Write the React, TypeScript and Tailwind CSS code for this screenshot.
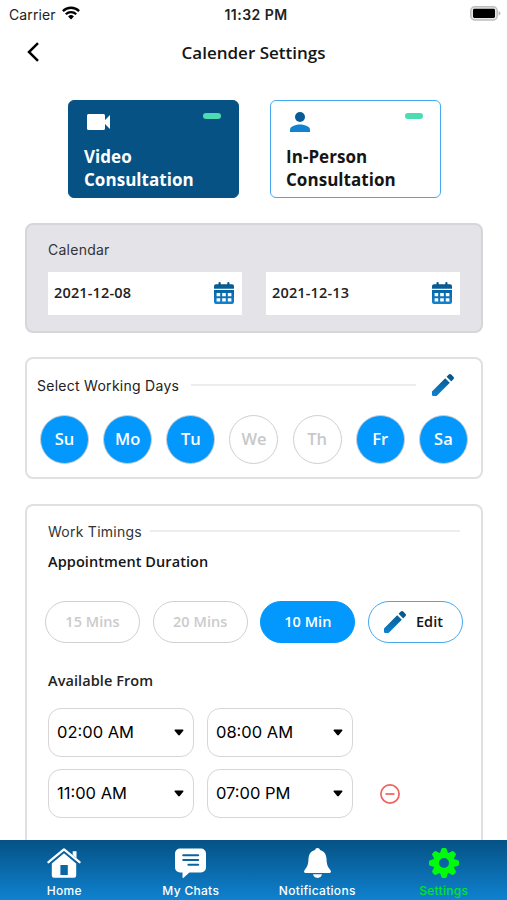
import { clsx } from "clsx"

const days = [
  { label: "Su", active: true },
  { label: "Mo", active: true },
  { label: "Tu", active: true },
  { label: "We", active: false },
  { label: "Th", active: false },
  { label: "Fr", active: true },
  { label: "Sa", active: true },
]

const durations = [
  { label: "15 Mins", active: false },
  { label: "20 Mins", active: false },
  { label: "10 Min", active: true },
]

const slots = [
  { from: "02:00 AM", to: "08:00 AM", removable: false },
  { from: "11:00 AM", to: "07:00 PM", removable: true },
]

const tabs = [
  { label: "Home", icon: HomeIcon, active: false },
  { label: "My Chats", icon: ChatIcon, active: false },
  { label: "Notifications", icon: BellIcon, active: false },
  { label: "Settings", icon: GearIcon, active: true },
]

function BlueGradient() {
  return (
    <defs>
      <linearGradient id="blue" x1="0" y1="0" x2="0" y2="1">
        <stop offset="0" stopColor="#065285" />
        <stop offset="1" stopColor="#0f83d2" />
      </linearGradient>
    </defs>
  )
}

function WifiIcon() {
  return (
    <svg className="w-[18px] h-[14px] -mt-0.5" viewBox="0 0 18 14" fill="none" stroke="#000" strokeWidth="2.3">
      <path d="M.9 5.1a11.5 11.5 0 0 1 16.2 0" />
      <path d="M3.8 8.2a7.4 7.4 0 0 1 10.4 0" />
      <path d="M9 13.4 6.1 10.5a4.1 4.1 0 0 1 5.8 0Z" fill="#000" stroke="none" />
    </svg>
  )
}

function BatteryIcon() {
  return (
    <svg className="w-[31px] h-[15px] -mt-0.5" viewBox="0 0 31 15">
      <rect x=".8" y=".8" width="26.4" height="13.2" rx="4" fill="#e8e8e8" stroke="#bdbdbd" strokeWidth="1.5" />
      <rect x="3" y="2.8" width="22" height="9.2" rx="1.4" fill="#000" />
      <path d="M28.6 5c2.4 1 2.4 3.6 0 4.6Z" fill="#b5b5b5" />
    </svg>
  )
}

function CalendarIcon() {
  return (
    <svg className="w-5 h-[22px] -mt-0.5" viewBox="0 0 20 22">
      <BlueGradient />
      <path
        fill="url(#blue)"
        fillRule="evenodd"
        d="M2 2.3h2.5V1q0-1 1.1-1t1.1 1v1.3h6.600V1q0-1 1.100-1t1.100 1v1.300H18a2 2 0 0 1 2 2v2.400H0V4.300a2 2 0 0 1 2-2ZM0 8h20v12a2 2 0 0 1-2 2H2a2 2 0 0 1-2-2Zm2.600 3v3.200h3.600V11Zm5.600 0v3.200h3.600V11Zm5.600 0v3.200h3.600V11ZM2.600 16.300v3.200h3.600v-3.200Zm5.600 0v3.200h3.600v-3.200Zm5.600 0v3.200h3.600v-3.200Z"
      />
    </svg>
  )
}

function PencilIcon() {
  return (
    <svg className="w-[22px] h-[22px]" viewBox="0 0 22 22">
      <BlueGradient />
      <path
        fill="url(#blue)"
        d="M0 17.4 13.2 4.2l4.6 4.6L4.6 22H1.2A1.2 1.2 0 0 1 0 20.8ZM14.6 2.8 16.8.6q1.2-1.2 2.4 0l2.2 2.2q1.2 1.2 0 2.4l-2.2 2.2Z"
      />
    </svg>
  )
}

function HomeIcon() {
  return (
    <svg className="w-[34px] h-[30px]" viewBox="0 0 34 30" fill="#fff">
      <path d="M1.500 14.200 17 1.400l15.500 12.800" fill="none" stroke="#fff" strokeWidth="2.300" strokeLinecap="round" strokeLinejoin="round" />
      <path d="M25.700 3.200h3.800v7l-3.800-3.200Z" />
      <path d="M17 5.200 29.200 15.400V27.500a2.200 2.200 0 0 1-2.200 2.200H7a2.200 2.200 0 0 1-2.200-2.200V15.400Z" />
      <path d="M1.800 16.400 17 4l15.200 12.400" fill="none" stroke="#0861a0" strokeWidth="1" />
      <path d="M13.400 17h7.400v10h-7.400Z" fill="#0967a6" />
    </svg>
  )
}

function ChatIcon() {
  return (
    <svg className="w-[31px] h-[30px]" viewBox="0 0 31 30">
      <path d="M5 .5h21a5 5 0 0 1 5 5v14a5 5 0 0 1-5 5H14.400L8.600 29.700q-1.100.700-1.100-.6v-4.600H5a5 5 0 0 1-5-5v-14a5 5 0 0 1 5-5Z" fill="#fff" />
      <path d="M8.200 7.300h15M8.200 12h15M13.400 16.800h9.800" stroke="#0865a3" strokeWidth="2" strokeLinecap="round" />
    </svg>
  )
}

function BellIcon() {
  return (
    <svg className="w-[27px] h-[30px]" viewBox="0 0 27 30" fill="#fff">
      <path d="M13.5 0c1.5 0 2.3.8 2.4 2 4.3 1.1 6.3 4.3 6.6 8.8.3 5.3.8 7.7 3.8 11.1 1.3 1.5.5 3-1 3H1.7c-1.5 0-2.3-1.5-1-3 3-3.4 3.5-5.8 3.8-11.1C4.8 6.3 6.8 3.1 11.1 2c.1-1.2.9-2 2.4-2Z" />
      <path d="M9 26.300h9c-.5 2.200-2.200 3.600-4.500 3.600S9.500 28.500 9 26.300Z" />
    </svg>
  )
}

function GearIcon() {
  return (
    <svg className="w-[30px] h-[30px]" viewBox="-15 -15 30 30">
      <g fill="#00fb0c">
        {[0, 45, 90, 135, 180, 225, 270, 315].map((a) => (
          <path key={a} transform={`rotate(${a})`} d="M-4.200-9-2.700-13.800Q-2.300-15-1.200-15h2.400q1.100 0 1.500 1.200L4.200-9Z" />
        ))}
      </g>
      <circle r="8" fill="none" stroke="#00fb0c" strokeWidth="6" />
    </svg>
  )
}

function ModeCard({ title, active, children }: { title: string; active?: boolean; children: React.ReactNode }) {
  return (
    <div
      className={clsx(
        "w-[171px] h-[98px] rounded-md border-[1.5px] pl-[15px] pr-[17px] pt-[9px]",
        active ? "bg-[#065285] border-[#065285] text-white" : "bg-white border-[#45a9ef] text-[#151515]",
      )}
    >
      <div className="flex justify-between h-[22px]">
        {children}
        <span className="w-[18px] h-1.5 rounded-full bg-[#4bdcb2] mt-[3px]" />
      </div>
      <div className="mt-[13px] w-[130px] text-[17px] leading-[23px] tracking-[0.04px] font-bold">{title}</div>
    </div>
  )
}

function DateField({ value }: { value: string }) {
  return (
    <div className="w-[194px] h-[43px] bg-white flex items-center justify-between pl-1.5 pr-2">
      <span className="-mt-0.5 text-[14.5px] font-semibold tracking-[0.15px] text-[#222]">{value}</span>
      <CalendarIcon />
    </div>
  )
}

function TimeSelect({ value }: { value: string }) {
  return (
    <div className="w-[146px] h-[49px] rounded-[13px] border-[1.5px] border-[#d6d6d6] flex items-center justify-between pl-2 pr-[9px] font-[Inter] text-[16.5px] text-black">
      {value}
      <svg className="w-[10px] h-[7px]" viewBox="0 0 10 7">
        <path d="M1.200 .5h7.600q1.200.2.500 1.300L5.800 6q-.8.900-1.600 0L.7 1.800Q0 .700 1.200.5Z" />
      </svg>
    </div>
  )
}

export default function App() {
  return (
    <div className="w-[507px] h-[900px] flex flex-col overflow-hidden bg-white font-['Open_Sans',sans-serif]">
      <div className="h-7 shrink-0 grid grid-cols-3 items-center pl-[9px] pr-[6px] font-[Inter] text-[14px] text-[#222]">
        <div className="flex items-center gap-1.5">
          <span className="tracking-[0.1px]">Carrier</span>
          <WifiIcon />
        </div>
        <span className="text-center font-semibold text-[14px] tracking-[0.45px] -mr-0.5 whitespace-nowrap">11:32 PM</span>
        <div className="flex justify-end">
          <BatteryIcon />
        </div>
      </div>

      <div className="h-[50px] shrink-0 grid grid-cols-[60px_1fr_60px] items-center">
        <svg className="w-3 h-5 ml-[27px] -mt-0.5" viewBox="0 0 12 20" fill="none" stroke="#000" strokeWidth="2.500">
          <path d="M11 1.200 2 10l9 8.800" />
        </svg>
        <h1 className="text-center text-[17px] font-semibold text-[#151515]">Calender Settings</h1>
      </div>

      <main className="flex-1 min-h-0 overflow-hidden pt-[22px] pl-[25px] pr-6">
        <div className="flex justify-center gap-[31px] pl-px">
          <ModeCard title="Video Consultation" active>
            <svg className="w-[23px] h-4 mt-[4px] ml-[3px]" viewBox="0 0 23 16" fill="#fff">
              <path d="M1.500 0h15q1.500 0 1.500 1.500V6l5-5v14l-5-5v4.500q0 1.500-1.500 1.500h-15Q0 16 0 14.500v-13Q0 0 1.500 0Z" />
            </svg>
          </ModeCard>
          <ModeCard title="In-Person Consultation">
            <svg className="w-5 h-5 mt-[1.5px] ml-[4px]" viewBox="0 0 20 20">
              <circle cx="10" cy="5" r="5" fill="#075b96" />
              <path d="M0 20v-2.500c0-3.400 6.600-5 10-5s10 1.600 10 5V20Z" fill="#1183d0" />
            </svg>
          </ModeCard>
        </div>

        <section className="mt-[25px] h-[110px] rounded-lg border-2 border-[#d6d6d9] bg-[#e4e3e8] px-[21px] pt-[15px]">
          <h2 className="font-[Inter] text-[14px] leading-5 tracking-[0.25px] text-[#333]">Calendar</h2>
          <div className="mt-3 flex justify-between">
            <DateField value="2021-12-08" />
            <DateField value="2021-12-13" />
          </div>
        </section>

        <section className="mt-6 h-[122px] rounded-lg border-2 border-[#e0e0e0] pl-[10px] pr-[27px] pt-[15px]">
          <div className="flex items-center h-[22px]">
            <h2 className="font-[Inter] text-[14px] tracking-[0.27px] text-[#222]">Select Working Days</h2>
            <span className="flex-1 h-[2px] bg-[#ededed] ml-3 mr-4" />
            <PencilIcon />
          </div>
          <div className="mt-[19px] ml-[3px] -mr-[14px] flex justify-between">
            {days.map((day) => (
              <span
                key={day.label}
                className={clsx(
                  "size-[49px] rounded-full border-[1.5px] border-[#cfcfcf] flex items-center justify-center text-[16.5px] font-semibold",
                  day.active ? "bg-[#0398fe] text-white" : "text-[#c8c8c8]",
                )}
              >
                {day.label}
              </span>
            ))}
          </div>
        </section>

        <section className="mt-[25px] h-[400px] rounded-lg border-2 border-[#e0e0e0] px-[21px] pt-[15px]">
          <div className="flex items-center h-5">
            <h2 className="font-[Inter] text-[14px] tracking-[0.25px] text-[#333]">Work Timings</h2>
            <span className="flex-1 h-[2px] bg-[#ededed] ml-2" />
          </div>
          <h3 className="mt-[11px] text-[14.5px] leading-5 tracking-[0.08px] font-semibold text-[#151515]">Appointment Duration</h3>
          <div className="mt-[29px] -mx-[3px] flex justify-between text-[14.5px] tracking-[0.05px] font-semibold">
            {durations.map((d) => (
              <span
                key={d.label}
                className={clsx(
                  "w-[95px] h-[42px] rounded-full border-[1.5px] flex items-center justify-center",
                  d.active ? "bg-[#0398fe] border-[#0398fe] text-white" : "border-[#d0d0d0] text-[#cbcbcb]",
                )}
              >
                {d.label}
              </span>
            ))}
            <span className="w-[95px] h-[42px] rounded-full border-[1.5px] border-[#45a9ef] flex items-center pl-[15px] gap-[10px] text-[#151515]">
              <PencilIcon />
              Edit
            </span>
          </div>

          <h3 className="mt-[28px] text-[14.5px] leading-5 tracking-[0.08px] font-semibold text-[#222]">Available From</h3>
          <div className="mt-[17px] flex flex-col gap-3">
            {slots.map((slot) => (
              <div key={slot.from} className="flex items-center gap-[13px]">
                <TimeSelect value={slot.from} />
                <TimeSelect value={slot.to} />
                {slot.removable && (
                  <svg className="size-5 ml-[14px]" viewBox="0 0 20 20" fill="none" stroke="#ef625d" strokeWidth="1.700">
                    <circle cx="10" cy="10" r="9.100" />
                    <path d="M5.500 10h9" />
                  </svg>
                )}
              </div>
            ))}
          </div>
        </section>
      </main>

      <nav className="h-[60px] shrink-0 grid grid-cols-4 pl-px bg-linear-to-b from-[#065285] to-[#0f82d0]">
        {tabs.map((tab) => (
          <div key={tab.label} className="flex flex-col items-center pt-2">
            <tab.icon />
            <span
              className={clsx(
                "mt-[5px] font-[Inter] text-[12px] leading-4 font-medium tracking-[0.3px]",
                tab.active ? "text-[#00e51c]" : "text-white",
              )}
            >
              {tab.label}
            </span>
          </div>
        ))}
      </nav>
    </div>
  )
}
